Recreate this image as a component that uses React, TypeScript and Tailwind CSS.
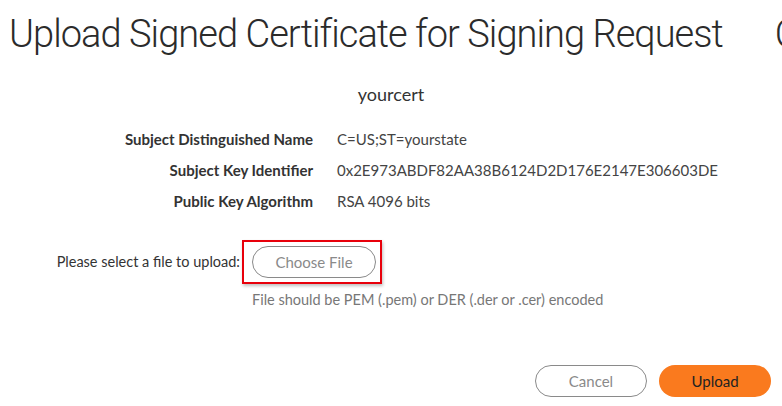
export default function App() {
  const rows = [
    { label: "Subject Distinguished Name", value: "C=US;ST=yourstate" },
    { label: "Subject Key Identifier", value: "0x2E973ABDF82AA38B6124D2D176E2147E306603DE" },
    { label: "Public Key Algorithm", value: "RSA 4096 bits" },
  ];

  return (
    <div className="w-[782px] h-[406px] overflow-hidden bg-white text-[#333] font-['Lato',sans-serif]">
      <div className="flex whitespace-nowrap pl-[9px] pt-[10px] font-['Roboto',sans-serif] font-light text-[38px] leading-[48px] tracking-[-0.95px] text-[#2b2b2b]">
        <span>Upload Signed Certificate for Signing Request</span>
        <span className="ml-[52px]">Cancel</span>
      </div>

      <div className="mt-[25px] text-center text-[18px] leading-[22px] text-[#333]">yourcert</div>

      <div className="mt-[24px] flex flex-col gap-[10px] text-[15px] leading-[21px]">
        {rows.map((r) => (
          <div key={r.label} className="flex">
            <div className="w-[313px] shrink-0 text-right font-bold text-[#333]">{r.label}</div>
            <div className="ml-[24px] text-[#444]">{r.value}</div>
          </div>
        ))}
      </div>

      <div className="mt-[28px] flex items-center text-[14.5px]">
        <div className="w-[240px] shrink-0 text-right text-[#333]">Please select a file to upload:</div>
        <div className="ml-[2px] h-[44px] w-[140px] border-2 border-[#e8000b] shadow-[1px_2px_3px_rgba(0,0,0,0.25)] flex items-center pl-[8px]">
          <button className="h-[32px] w-[124px] rounded-full border border-[#8a8a8a] bg-white text-[15px] text-[#8a8a8a]">
            Choose File
          </button>
        </div>
      </div>

      <div className="mt-[7px] pl-[252px] text-[14.5px] leading-[18px] text-[#777]">
        File should be PEM (.pem) or DER (.der or .cer) encoded
      </div>

      <div className="mt-[56px] flex justify-end gap-[12px] pr-[11px] text-[15px]">
        <button className="h-[32px] w-[112px] rounded-full border border-[#8a8a8a] bg-white text-[#8a8a8a]">Cancel</button>
        <button className="h-[32px] w-[112px] rounded-full bg-[#fa7a1e] text-[#222]">Upload</button>
      </div>
    </div>
  );
}
